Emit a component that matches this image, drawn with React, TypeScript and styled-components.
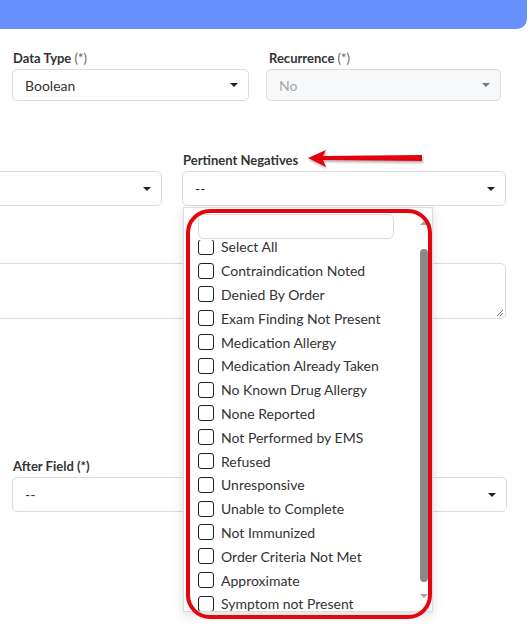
import React from "react";
import styled, { createGlobalStyle } from "styled-components";

const Global = createGlobalStyle`
  html, body { margin: 0; padding: 0; background: #fff; }
  body { font-family: Lato, "Open Sans", sans-serif; color: #333; }
  * { box-sizing: border-box; }
`;

const Page = styled.div`
  position: relative;
  width: 529px;
  height: 633px;
  overflow: hidden;
  background: #fff;
`;

const Header = styled.div`
  height: 29px;
  margin-right: 2px;
  background: #6891ff;
  border-bottom-right-radius: 10px;
`;

const Row = styled.div<{ $cols: string; $gap: number; $left: number; $top: number }>`
  display: grid;
  grid-template-columns: ${(p) => p.$cols};
  column-gap: ${(p) => p.$gap}px;
  margin-left: ${(p) => p.$left}px;
  margin-top: ${(p) => p.$top}px;
`;

const Field = styled.div`
  display: flex;
  flex-direction: column;
  position: relative;
`;

const Label = styled.div`
  font-size: 13px;
  font-weight: 700;
  color: #333;
  height: 18px;
  line-height: 18px;
  margin-bottom: 2px;
  padding-left: 1px;
  white-space: nowrap;
`;

const Req = styled.span`
  font-weight: 400;
  color: #666;
`;

const Select = styled.div<{ $h: number; $disabled?: boolean }>`
  height: ${(p) => p.$h}px;
  border: 1px solid #dcdcdc;
  border-radius: 5px;
  background: ${(p) => (p.$disabled ? "#f7f8fa" : "#fff")};
  color: ${(p) => (p.$disabled ? "#a6a9ad" : "#333")};
  font-size: 14px;
  display: flex;
  align-items: center;
  justify-content: space-between;
  padding: 0 10px 0 12px;
`;

const Caret = styled.span<{ $light?: boolean }>`
  width: 0;
  height: 0;
  border-left: 4px solid transparent;
  border-right: 4px solid transparent;
  border-top: 4px solid ${(p) => (p.$light ? "#777" : "#222")};
`;

const TextArea = styled.div`
  position: relative;
  height: 56px;
  border: 1px solid #dcdcdc;
  border-radius: 5px;
  margin-top: 57px;
  margin-left: -100px;
  width: 606px;
`;

const Grip = styled.svg`
  position: absolute;
  right: 1px;
  bottom: 1px;
`;

const Panel = styled.div`
  position: absolute;
  left: 183px;
  top: 207px;
  width: 250px;
  height: 405px;
  background: #fff;
  border: 1px solid #ddd;
  box-shadow: 0 3px 10px rgba(0, 0, 0, 0.14);
  display: flex;
  flex-direction: column;
  overflow: hidden;
`;

const Search = styled.div`
  margin: 6px 0 0 14px;
  width: 196px;
  height: 25px;
  border: 1px solid #dcdcdc;
  border-radius: 6px;
  flex-shrink: 0;
`;

const List = styled.div`
  margin-top: 1px;
  flex: 1;
  overflow: hidden;
  padding-left: 14px;
`;

const Inner = styled.div`
  margin-top: -5px;
`;

const Item = styled.div`
  height: 23.8px;
  display: flex;
  align-items: center;
  gap: 7px;
  font-size: 14px;
  color: #333;
  white-space: nowrap;
`;

const Box = styled.span`
  width: 16px;
  height: 16px;
  border: 1.5px solid #222;
  border-radius: 3px;
  flex-shrink: 0;
`;

const Track = styled.div`
  position: absolute;
  right: 3px;
  top: 0;
  bottom: 0;
  width: 10px;
`;

const Thumb = styled.div`
  position: absolute;
  left: 1px;
  top: 41px;
  width: 8px;
  height: 333px;
  border-radius: 4px;
  background: #8a8a8a;
`;

const ScrollArrow = styled.div<{ $down?: boolean }>`
  position: absolute;
  left: 1px;
  ${(p) => (p.$down ? "top: 386px;" : "top: 13px;")}
  width: 0;
  height: 0;
  border-left: 4px solid transparent;
  border-right: 4px solid transparent;
  ${(p) =>
    p.$down ? "border-top: 4px solid #a3a3a3;" : "border-bottom: 4px solid #a3a3a3;"}
`;

const Annotation = styled.div`
  position: absolute;
  left: 186px;
  top: 209px;
  width: 246px;
  height: 410px;
  border: 4px solid #e5060d;
  border-radius: 24px;
  pointer-events: none;
`;

const Arrow = styled.svg`
  position: absolute;
  left: 304px;
  top: 148px;
  overflow: visible;
`;

const items = [
  "Select All",
  "Contraindication Noted",
  "Denied By Order",
  "Exam Finding Not Present",
  "Medication Allergy",
  "Medication Already Taken",
  "No Known Drug Allergy",
  "None Reported",
  "Not Performed by EMS",
  "Refused",
  "Unresponsive",
  "Unable to Complete",
  "Not Immunized",
  "Order Criteria Not Met",
  "Approximate",
  "Symptom not Present",
];

export default function App() {
  return (
    <Page>
      <Global />
      <Header />
      <Row $cols="237px 235px" $gap={17} $left={12} $top={20}>
        <Field>
          <Label>
            Data Type <Req>(*)</Req>
          </Label>
          <Select $h={32}>
            <span>Boolean</span>
            <Caret />
          </Select>
        </Field>
        <Field>
          <Label style={{ paddingLeft: 3 }}>
            Recurrence <Req>(*)</Req>
          </Label>
          <Select $h={32} $disabled>
            <span>No</span>
            <Caret $light />
          </Select>
        </Field>
      </Row>
      <Row $cols="262px 324px" $gap={20} $left={-100} $top={50}>
        <Field>
          <Label>&nbsp;</Label>
          <Select $h={35}>
            <span />
            <Caret />
          </Select>
        </Field>
        <Field>
          <Label>Pertinent Negatives</Label>
          <Select $h={35}>
            <span>--</span>
            <Caret />
          </Select>
        </Field>
      </Row>
      <TextArea>
        <Grip width="10" height="10" viewBox="0 0 10 10">
          <path d="M9 3 L3 9 M9 6 L6 9" stroke="#777" strokeWidth="1" />
        </Grip>
      </TextArea>
      <Row $cols="495px" $gap={0} $left={12} $top={138}>
        <Field>
          <Label>After Field (*)</Label>
          <Select $h={35}>
            <span>--</span>
            <Caret />
          </Select>
        </Field>
      </Row>

      <Panel>
        <Search />
        <List>
          <Inner>
            {items.map((t) => (
              <Item key={t}>
                <Box />
                <span>{t}</span>
              </Item>
            ))}
          </Inner>
        </List>
        <Track>
          <ScrollArrow />
          <Thumb />
          <ScrollArrow $down />
        </Track>
      </Panel>
      <Annotation />
      <Arrow width="120" height="24" viewBox="0 0 120 24">
        <defs>
          <filter id="sh" x="-10%" y="-50%" width="120%" height="200%">
            <feDropShadow dx="1" dy="2" stdDeviation="1.2" floodColor="#000" floodOpacity="0.3" />
          </filter>
        </defs>
        <g filter="url(#sh)">
          <polygon points="4,10 22,2 19,8 118,7 118,13 19,12 22,19" fill="#e5060d" />
        </g>
      </Arrow>
    </Page>
  );
}
